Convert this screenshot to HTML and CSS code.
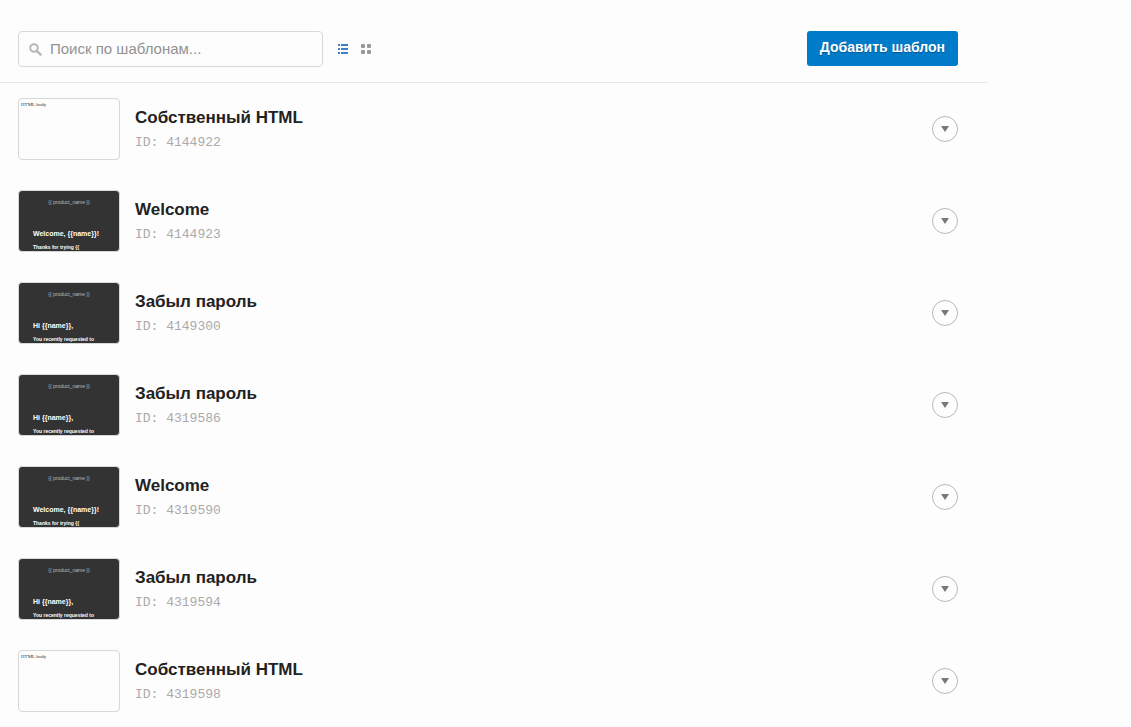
FILE: index.html
```html
<!DOCTYPE html>
<html lang="ru">
<head>
    <meta charset="UTF-8">
    <meta name="viewport" content="width=device-width, initial-scale=1.0">
    <title>Шаблоны</title>
    <link rel="stylesheet" href="styles.css">
</head>
<body>
    <main class="page">
        <header class="toolbar">
            <label class="search">
                <svg class="search-icon" viewBox="0 0 13 13" aria-hidden="true">
                    <circle cx="5" cy="5" r="3.8" fill="none" stroke="currentColor" stroke-width="2"/>
                    <path d="M7.8 7.8L11.6 11.6" stroke="currentColor" stroke-width="2.4" stroke-linecap="round"/>
                </svg>
                <input class="search-input" type="search" placeholder="Поиск по шаблонам..." aria-label="Поиск по шаблонам">
            </label>
            <div class="views">
                <button class="view active" type="button" aria-label="Список">
                    <svg viewBox="0 0 10 10" fill="currentColor" aria-hidden="true">
                        <path d="M0 0h2v2H0zM3 0h7v2H3zM0 4h2v2H0zM3 4h7v2H3zM0 8h2v2H0zM3 8h7v2H3z"/>
                    </svg>
                </button>
                <button class="view" type="button" aria-label="Сетка">
                    <svg viewBox="0 0 10 10" fill="currentColor" aria-hidden="true">
                        <rect width="4" height="4" rx="1"/>
                        <rect x="6" width="4" height="4" rx="1"/>
                        <rect y="6" width="4" height="4" rx="1"/>
                        <rect x="6" y="6" width="4" height="4" rx="1"/>
                    </svg>
                </button>
            </div>
            <button class="add-button" type="button">Добавить шаблон</button>
        </header>

        <ul class="templates" id="templates"></ul>
    </main>

    <script src="script.js"></script>
</body>
</html>
```

FILE: styles.css
```css
* {
    box-sizing: border-box;
}
body {
    margin: 0;
    background-color: #fdfdfd;
    color: #222;
    font-family: "Liberation Sans", Arial, sans-serif;
}
button {
    padding: 0;
    border: 0;
    background: none;
    cursor: pointer;
}
.page {
    max-width: 988px;
}

/* toolbar */
.toolbar {
    display: flex;
    align-items: flex-start;
    padding: 31px 30px 15px 18px;
    border-bottom: 1px solid #e8e8e8;
}
.search {
    display: flex;
    align-items: center;
    gap: 8px;
    flex: 0 1 305px;
    height: 36px;
    padding: 0 10px;
    border: 1px solid #d8d8d8;
    border-radius: 4px;
    background-color: #fdfdfd;
}
.search-icon {
    flex: none;
    width: 13px;
    height: 13px;
    color: #b8b8b8;
}
.search-input {
    flex: 1;
    min-width: 0;
    padding: 0;
    border: 0;
    outline: 0;
    background: none;
    font: 15px/20px "Liberation Sans", Arial, sans-serif;
    color: #222;
}
.search-input::placeholder {
    color: #929292;
}
.views {
    display: flex;
    align-items: center;
    gap: 13px;
    height: 36px;
    margin-left: 15px;
}
.view {
    width: 10px;
    height: 10px;
    color: #999;
}
.view.active {
    color: #3f7fc5;
}
.view svg {
    display: block;
}
.add-button {
    height: 35px;
    margin-left: auto;
    padding: 0 13px 4px;
    border-radius: 3px;
    background-color: #007bc9;
    color: #fff;
    font: bold 14px/20px "Liberation Sans", Arial, sans-serif;
    text-shadow: 0 1px 1px rgba(0, 0, 0, 0.3);
}

/* list of templates */
.templates {
    margin: 0;
    padding: 0;
    list-style: none;
}
.template {
    display: flex;
    align-items: center;
    gap: 15px;
    padding: 15px 30px 15px 18px;
}
.thumb {
    flex: none;
    width: 102px;
    height: 62px;
    padding: 3px 2px;
    overflow: hidden;
    border: 1px solid #d8d8d8;
    border-radius: 4px;
    background-color: #fdfdfd;
    color: #333;
    font: 5px/6px "Liberation Serif", "Times New Roman", serif;
}
.thumb.dark {
    padding: 8px 0 0 14px;
    background-color: #333;
    color: #fff;
    font: bold 5px/6px "Liberation Sans", Arial, sans-serif;
    white-space: nowrap;
}
.thumb p {
    margin: 0;
}
.thumb-product {
    padding-right: 14px;
    color: #bbb;
    font-weight: normal;
    text-align: center;
}
.thumb .thumb-title {
    margin: 25px 0 6px;
    font-size: 7px;
    line-height: 8px;
}
.info {
    flex: 1;
    padding-top: 2px;
}
.name {
    margin: 0 0 4px;
    font-size: 17px;
    line-height: 22px;
}
.template-id {
    margin: 0;
    color: #aaa;
    font: 13px/20px "Liberation Mono", "Courier New", monospace;
}
.menu-button {
    display: flex;
    align-items: center;
    justify-content: center;
    width: 26px;
    height: 26px;
    border: 1px solid #b8b8b8;
    border-radius: 50%;
    color: #777;
}
.menu-button svg {
    width: 8px;
    height: 6px;
}
```

FILE: script.js
```js
const templates = [
    { id: 4144922, type: 'html' },
    { id: 4144923, type: 'welcome' },
    { id: 4149300, type: 'password' },
    { id: 4319586, type: 'password' },
    { id: 4319590, type: 'welcome' },
    { id: 4319594, type: 'password' },
    { id: 4319598, type: 'html' }
];

const types = {
    html: { name: 'Собственный HTML' },
    welcome: { name: 'Welcome', title: 'Welcome, {{name}}!', text: 'Thanks for trying {{' },
    password: { name: 'Забыл пароль', title: 'Hi {{name}},', text: 'You recently requested to' }
};

function renderThumb(type) {
    if (!type.title) {
        return '<div class="thumb">HTML body</div>';
    }
    return `
        <div class="thumb dark">
            <p class="thumb-product">{{ product_name }}</p>
            <p class="thumb-title">${type.title}</p>
            <p>${type.text}</p>
        </div>
    `;
}

document.getElementById('templates').innerHTML = templates.map(template => {
    const type = types[template.type];
    return `
        <li class="template">
            ${renderThumb(type)}
            <div class="info">
                <h2 class="name">${type.name}</h2>
                <p class="template-id">ID: ${template.id}</p>
            </div>
            <button class="menu-button" type="button" aria-label="Действия">
                <svg viewBox="0 0 8 6" fill="currentColor" aria-hidden="true"><path d="M0 0h8L4 6z"/></svg>
            </button>
        </li>
    `;
}).join('');
```
